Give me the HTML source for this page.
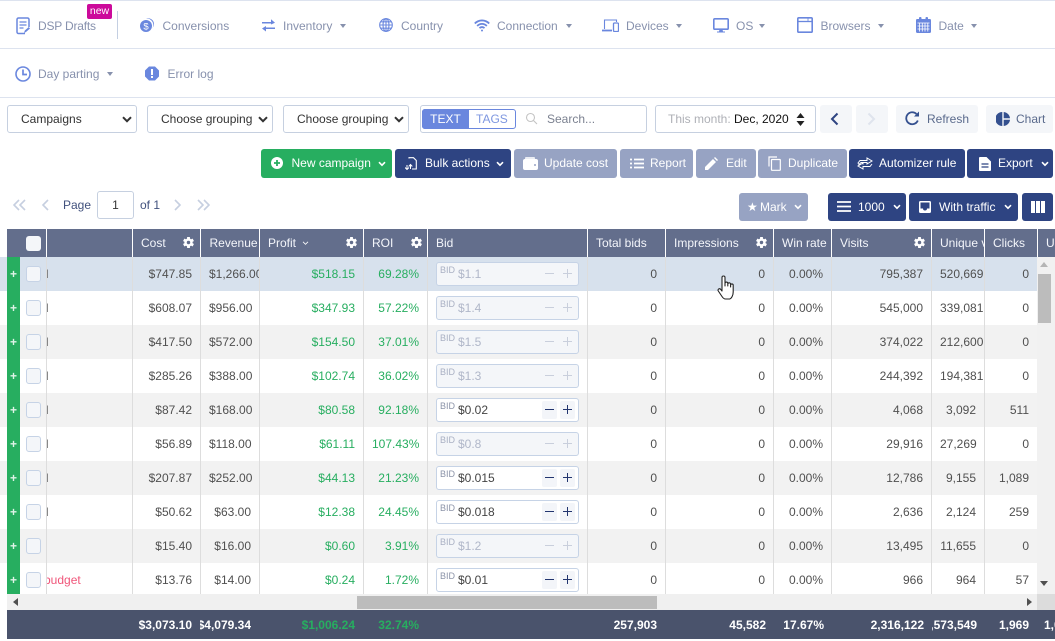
<!DOCTYPE html>
<html><head><meta charset="utf-8"><style>
html,body{margin:0;padding:0;background:#fff}
#p{position:relative;width:1055px;height:641px;overflow:hidden;font:12px/16px "Liberation Sans",Arial,sans-serif;color:#333;background:#fff}
#p div,#p span,#p svg{position:absolute}
.t{white-space:nowrap}
.n{color:#8791ad;top:18px;white-space:nowrap}
.n2{top:66px}
.hl{height:1px;left:0;width:1055px;background:#dde3ef}
.sel{top:105px;height:28px;box-sizing:border-box;border:1px solid #c6d0e0;border-radius:3px;background:#fff;line-height:26px;color:#333;white-space:nowrap}
.gb{top:105px;height:28px;background:#f4f6f9;border-radius:3px;line-height:28px;color:#5a6a8c;white-space:nowrap}
.b{top:149px;height:29px;border-radius:3px;color:#fff;background:#2e4482}
.b3{top:193px;height:28px;border-radius:3px;color:#fff;background:#2e4482}
.l{background:#97a3c3}
.tx{top:6px;white-space:nowrap}
.b3 .tx{top:6px}
.g{background:#27ae60}
.th{top:229px;height:28px;background:#636e8c}
.hc{top:235px;color:#f4f6fb;white-space:nowrap}
.hb{top:229px;width:1px;height:28px;background:#fff}
.r{left:0;width:1037px;height:34px;overflow:hidden}
.r>div{top:0;height:34px;line-height:34px;border-left:1px solid #ddd;box-sizing:border-box;overflow:hidden;white-space:nowrap;text-align:right;padding:0 8px;color:#505050}
.r>.pl{left:7px;width:13px;background:#27ae60;border:0;padding:0}
.r>.ck{left:26px;top:9px;width:15px;height:16px;box-sizing:border-box;border:1px solid #c6d3e6;border-radius:3px;background:#f4f6f9;padding:0}
.r>.a{left:46px;width:86px;text-align:left;padding:0}
.a span{left:-5px;top:0;color:#777}
.r>.co{left:132px;width:68px}
.r>.re{left:200px;width:59px}
.r>.pr{left:259px;width:104px;color:#27ae60}
.r>.ro{left:363px;width:64px;color:#27ae60}
.r>.bd{left:427px;width:160px;padding:0}
.r>.tb{left:587px;width:78px}
.r>.im{left:665px;width:108px}
.r>.wi{left:773px;width:58px}
.r>.vi{left:831px;width:100px}
.r>.un{left:931px;width:53px}
.r>.cl{left:984px;width:53px}
.in{left:8px;top:5px;width:143px;height:24px;box-sizing:border-box;border:1px solid #c6d3e6;border-radius:3px;background:#fff}
.in.d{background:#f4f6f9}
.bl{left:3px;top:-6px;font-size:9px;color:#8b93a8;line-height:26px}
.d .bl{color:#a9b0c3}
.vl{left:21px;top:-6px;line-height:34px;color:#444;text-align:left}
.d .vl{color:#b0b7c9}
.mn,.ps{top:2px;width:15px;height:18px;background:#f3f5f9;border-radius:2px}
.mn{left:105px}.ps{left:123px}
.d .mn,.d .ps{background:none}
.mn:before{content:"";position:absolute;left:3px;top:8px;width:9px;height:1px;background:#22356f}
.ps:before{content:"";position:absolute;left:3px;top:8px;width:9px;height:1px;background:#22356f}
.ps:after{content:"";position:absolute;left:7px;top:4px;width:1px;height:9px;background:#22356f}
.d .mn:before,.d .ps:before,.d .ps:after{background:#c9cfdc}
.f{top:610px;height:29px;left:7px;width:1048px;background:#4a536c}
.ft{top:617px;font-weight:bold;color:#fff;white-space:nowrap;overflow:hidden;display:flex;justify-content:flex-end}
.ft.gr{color:#27ae60}
.ft b{flex:none}
.pg{top:197px;color:#41517d;white-space:nowrap}
</style></head><body><div id="p">
<svg width="0" height="0"><defs>
<symbol id="gear" viewBox="0 0 12 12"><g fill="#fff"><rect x="4.4" y="0" width="3.2" height="12" rx=".5"/><rect x="4.4" y="0" width="3.2" height="12" rx=".5" transform="rotate(60 6 6)"/><rect x="4.4" y="0" width="3.2" height="12" rx=".5" transform="rotate(120 6 6)"/><circle cx="6" cy="6" r="4.5"/></g><circle cx="6" cy="6" r="1.9" fill="#636e8c"/></symbol>
<symbol id="ch" viewBox="0 0 8 6"><path d="M1 1.2l3 3 3-3" fill="none" stroke="#fff" stroke-width="1.6"/></symbol>
<symbol id="dk" viewBox="0 0 10 7"><path d="M1 1.2l4 4 4-4" fill="none" stroke="#333" stroke-width="2"/></symbol>
<symbol id="ca" viewBox="0 0 6 4"><path d="M0 0h6L3 4z" fill="#8791ad"/></symbol>
</defs></svg>

<div class="hl" style="top:0"></div><div class="hl" style="top:48px"></div><div class="hl" style="top:97px"></div>
<div style="left:117px;top:11px;width:1px;height:28px;background:#c4cfe2"></div>

<svg style="left:16px;top:17px" width="14" height="18" viewBox="0 0 14 18"><path d="M9 16.500H2.500a1.500 1.500 0 0 1-1.500-1.500V2.500A1.500 1.500 0 0 1 2.500 1h9A1.500 1.500 0 0 1 13 2.500V10" fill="none" stroke="#6a87de" stroke-width="1.500"/><path d="M3.500 5h7M3.500 8h7M3.500 11h4" stroke="#6a87de" stroke-width="1.200"/><path d="M8 16l.8-2.500 4-3.500 1.200 1.500-4 3.500z" fill="#6a87de"/></svg>
<span class="n" style="left:38px;letter-spacing:-.2px">DSP Drafts</span>
<div style="left:87px;top:4px;width:25px;height:15px;background:#cc0a9b;border-radius:2px;color:#fff;font-size:10.500px;line-height:15px;text-align:center">new</div>

<svg style="left:140px;top:17px" width="14" height="16" viewBox="0 0 14 16"><path d="M6 1.500A6 6 0 0 1 14 7a6 6 0 0 1-1.500 4 6.500 6.500 0 0 0-6.500-9.500z" fill="#6a87de"/><circle cx="6" cy="9" r="6" fill="#6a87de"/><text x="6" y="12.500" font-size="9.500" text-anchor="middle" fill="#fff" font-family="Liberation Sans">$</text></svg>
<span class="n" style="left:162.500px">Conversions</span>

<svg style="left:262px;top:18px" width="13" height="14" viewBox="0 0 13 14"><path d="M0 4h9V1.200L13 4.800l-4 1.700V5.500H0zM13 9.500H4V8L0 10.500 4 13.500V11h9z" fill="#6a87de"/></svg>
<span class="n" style="left:283px">Inventory</span>
<svg style="left:340px;top:24px" width="6" height="4"><use href="#ca"/></svg>

<svg style="left:379px;top:18px" width="14" height="14" viewBox="0 0 14 14" fill="none" stroke="#6a87de" stroke-width="1.100"><circle cx="7" cy="7" r="6.300"/><ellipse cx="7" cy="7" rx="3" ry="6.300"/><path d="M.7 7h12.600M1.600 3.800h10.800M1.600 10.200h10.800M7 .7v12.600"/></svg>
<span class="n" style="left:401px">Country</span>

<svg style="left:474px;top:19px" width="16" height="13" viewBox="0 0 16 13" fill="none" stroke="#6a87de" stroke-width="1.800"><path d="M.8 4.500a10 10 0 0 1 14.400 0M3.200 7a6.500 6.500 0 0 1 9.600 0M5.500 9.200a3.300 3.300 0 0 1 5 0"/><circle cx="8" cy="11.500" r="1" fill="#6a87de" stroke="none"/></svg>
<span class="n" style="left:497px">Connection</span>
<svg style="left:566px;top:24px" width="6" height="4"><use href="#ca"/></svg>

<svg style="left:602px;top:19px" width="17" height="13" viewBox="0 0 17 13" fill="none" stroke="#6a87de"><path d="M2.500 10V1h12v2" stroke-width="1.100"/><path d="M0 11.500h10" stroke-width="1.800"/><rect x="11.500" y="4" width="5" height="8.500" rx="1" stroke-width="1.300"/></svg>
<span class="n" style="left:626px">Devices</span>
<svg style="left:676px;top:24px" width="6" height="4"><use href="#ca"/></svg>

<svg style="left:713px;top:18px" width="16" height="15" viewBox="0 0 16 15"><rect x=".8" y=".8" width="14.400" height="10.400" rx="1" fill="none" stroke="#6a87de" stroke-width="1.600"/><path d="M6.500 11.500h3l.5 2h2v1H4v-1h2z" fill="#6a87de"/></svg>
<span class="n" style="left:736px">OS</span>
<svg style="left:759px;top:24px" width="6" height="4"><use href="#ca"/></svg>

<svg style="left:797px;top:17px" width="16" height="16" viewBox="0 0 16 16" fill="none" stroke="#6a87de"><rect x=".8" y=".8" width="14.400" height="14.400" rx="1" stroke-width="1.600"/><path d="M1 4.500h14" stroke-width="1.300"/><path d="M11 1v3.500" stroke-width=".8"/></svg>
<span class="n" style="left:820.500px">Browsers</span>
<svg style="left:878px;top:24px" width="6" height="4"><use href="#ca"/></svg>

<svg style="left:916px;top:17px" width="15" height="16" viewBox="0 0 15 16"><rect x="0" y="2" width="15" height="14" rx="1.200" fill="#6a87de"/><rect x="3" y="0" width="2.500" height="4" rx="1" fill="#6a87de"/><rect x="9.500" y="0" width="2.500" height="4" rx="1" fill="#6a87de"/><path d="M1.500 6h12M1.500 9h12M1.500 12h12M3.500 6v8.500M6.300 6v8.500M9 6v8.500M11.800 6v8.500" stroke="#fff" stroke-width=".8"/></svg>
<span class="n" style="left:938.500px">Date</span>
<svg style="left:971px;top:24px" width="6" height="4"><use href="#ca"/></svg>

<svg style="left:15px;top:66px" width="16" height="16" viewBox="0 0 16 16" fill="none" stroke="#6a87de"><circle cx="8" cy="8" r="7" stroke-width="1.600"/><path d="M8 3.500V8.500h4" stroke-width="1.700"/></svg>
<span class="n n2" style="left:38px">Day parting</span>
<svg style="left:107px;top:72px" width="6" height="4"><use href="#ca"/></svg>
<svg style="left:145px;top:66px" width="14" height="15" viewBox="0 0 14 15"><path d="M4 .5h6L14 4.500v6L10 14.500H4L0 10.500v-6z" fill="#6a87de"/><rect x="6" y="3" width="2" height="6" fill="#fff"/><rect x="6" y="10" width="2" height="2" fill="#fff"/></svg>
<span class="n n2" style="left:167.500px">Error log</span>

<div class="sel" style="left:7px;width:130px;padding-left:13px">Campaigns</div>
<svg style="left:122px;top:116px" width="10" height="7"><use href="#dk"/></svg>
<div class="sel" style="left:147px;width:126px;padding-left:13px">Choose grouping</div>
<svg style="left:258px;top:116px" width="10" height="7"><use href="#dk"/></svg>
<div class="sel" style="left:283px;width:126px;padding-left:13px">Choose grouping</div>
<svg style="left:394px;top:116px" width="10" height="7"><use href="#dk"/></svg>

<div class="sel" style="left:420px;width:227px"></div>
<div style="left:422px;top:109px;width:94px;height:20px;box-sizing:border-box;border:1px solid #6a87de;border-radius:3px;background:#fff"></div>
<div style="left:422px;top:109px;width:47px;height:20px;background:#6a87de;border-radius:3px 0 0 3px;color:#fff;line-height:20px;text-align:center">TEXT</div>
<span class="t" style="left:476px;top:111px;color:#7e97e0">TAGS</span>
<svg style="left:525px;top:112px" width="13" height="13" viewBox="0 0 13 13" fill="none" stroke="#c4c4c4" stroke-width="1.100"><circle cx="5.500" cy="5.500" r="4"/><path d="M8.500 8.500l3.500 3.500"/></svg>
<span class="t" style="left:547px;top:111px;color:#7b8190">Search...</span>

<div class="sel" style="left:655px;width:161px"></div>
<span class="t" style="left:668px;top:111px;color:#aeb0b6">This month:</span>
<span class="t" style="left:734px;top:111px;color:#111">Dec, 2020</span>
<svg style="left:796px;top:113px" width="9" height="13" viewBox="0 0 9 13"><path d="M4.500 0L8.500 5H.5zM4.500 13L.5 8h8z" fill="#222"/></svg>

<div class="gb" style="left:820px;width:32px"></div>
<svg style="left:830px;top:112px" width="9" height="14" viewBox="0 0 9 14"><path d="M7.500 1.500L2 7l5.500 5.500" fill="none" stroke="#2e4482" stroke-width="2"/></svg>
<div class="gb" style="left:856px;width:32px"></div>
<svg style="left:867px;top:112px" width="9" height="14" viewBox="0 0 9 14"><path d="M1.500 1.500L7 7l-5.500 5.500" fill="none" stroke="#dfe4ed" stroke-width="2"/></svg>
<div class="gb" style="left:896px;width:82px"></div>
<svg style="left:905px;top:111px" width="15" height="15" viewBox="0 0 15 15" fill="none" stroke="#34508f" stroke-width="1.800"><path d="M12.800 9.500A6 6 0 1 1 11.500 3"/><path d="M14 .5v5h-5z" fill="#34508f" stroke="none"/></svg>
<span class="t" style="left:927px;top:111px;color:#5a6a8c">Refresh</span>
<div class="gb" style="left:986px;width:67px"></div>
<svg style="left:996px;top:112px" width="14" height="14" viewBox="0 0 14 14"><path d="M6.300 0v14A7 7 0 0 1 6.300 0zM7.700 0A7 7 0 0 1 14 6.300H7.700zM7.700 7.700H14A7 7 0 0 1 7.700 14z" fill="#34508f"/></svg>
<span class="t" style="left:1016px;top:111px;color:#5a6a8c">Chart</span>

<div class="b g" style="left:261px;width:131px"><span class="tx" style="left:30.500px">New campaign</span>
<svg style="left:10px;top:8px" width="12" height="12" viewBox="0 0 12 12"><circle cx="6" cy="6" r="6" fill="#fff"/><path d="M3 6h6M6 3v6" stroke="#27ae60" stroke-width="1.800"/></svg>
<svg style="left:117px;top:12px" width="8" height="6"><use href="#ch"/></svg></div>
<div class="b" style="left:395px;width:116px"><span class="tx" style="left:30px">Bulk actions</span>
<svg style="left:10px;top:8px" width="12" height="13" viewBox="0 0 12 13" fill="none" stroke="#fff"><path d="M4 1.500V.7h4.500L11.300 3.500V12H7" stroke-width="1.100"/><path d="M2 8v4M0 10.500l2 2 2-2M5.500 12V8M3.700 9.500l1.800-2 1.800 2" stroke-width="1"/></svg>
<svg style="left:101px;top:12px" width="8" height="6"><use href="#ch"/></svg></div>
<div class="b l" style="left:514px;width:103px"><span class="tx" style="left:30px">Update cost</span>
<svg style="left:9px;top:8px" width="15" height="13" viewBox="0 0 15 13"><rect x="0" y="2" width="15" height="11" rx="2" fill="#fff"/><rect x="2" y="0" width="10" height="2.500" rx="1" fill="#fff" opacity=".8"/><circle cx="12" cy="8" r="1" fill="#97a3c3"/></svg></div>
<div class="b l" style="left:620px;width:73px"><span class="tx" style="left:30px">Report</span>
<svg style="left:10px;top:9px" width="14" height="11" viewBox="0 0 14 11"><path d="M4 1.500h10M4 5.500h10M4 9.500h10M0 1.500h2M0 5.500h2M0 9.500h2" stroke="#fff" stroke-width="1.800"/></svg></div>
<div class="b l" style="left:696px;width:60px"><span class="tx" style="left:30px">Edit</span>
<svg style="left:9px;top:8px" width="13" height="13" viewBox="0 0 13 13"><path d="M0 13V10L8 2l3 3-8 8zM9 1l1-1 3 3-1 1z" fill="#fff"/></svg></div>
<div class="b l" style="left:758px;width:89px"><span class="tx" style="left:30px">Duplicate</span>
<svg style="left:10px;top:7px" width="13" height="15" viewBox="0 0 13 15" fill="none" stroke="#fff" stroke-width="1.200"><path d="M1 10.500V1h8"/><rect x="3.500" y="3.500" width="8.800" height="10.800" rx=".5"/></svg></div>
<div class="b" style="left:849px;width:116px"><span class="tx" style="left:30px">Automizer rule</span>
<svg style="left:8px;top:8px" width="16" height="13" viewBox="0 0 16 13" fill="none" stroke="#fff" stroke-width="1"><path d="M1 6l2-2.500h7V1l5 3-5 3V5.500H4L2 7.500zM15 7l-2 2.500H6V12L1 9l5-3v1.500"/></svg></div>
<div class="b" style="left:967px;width:86px"><span class="tx" style="left:31px">Export</span>
<svg style="left:12px;top:8px" width="12" height="14" viewBox="0 0 12 14"><path d="M0 1a1 1 0 0 1 1-1h6.500L12 4.500V13a1 1 0 0 1-1 1H1a1 1 0 0 1-1-1z" fill="#fff"/><path d="M2.500 7h7M2.500 10h7" stroke="#2e4482" stroke-width="1.200"/></svg>
<svg style="left:74px;top:12px" width="8" height="6"><use href="#ch"/></svg></div>

<svg style="left:13px;top:199px" width="13" height="12" viewBox="0 0 13 12" fill="none" stroke="#c6cfe0" stroke-width="1.600"><path d="M6 1L1 6l5 5M12 1L7 6l5 5"/></svg>
<svg style="left:41px;top:199px" width="8" height="12" viewBox="0 0 8 12" fill="none" stroke="#c6cfe0" stroke-width="1.600"><path d="M7 1L2 6l5 5"/></svg>
<span class="pg" style="left:63px">Page</span>
<div style="left:97px;top:191px;width:37px;height:28px;box-sizing:border-box;border:1px solid #c6d0e0;border-radius:3px;text-align:center;line-height:26px;color:#333">1</div>
<span class="pg" style="left:140px">of 1</span>
<svg style="left:174px;top:199px" width="8" height="12" viewBox="0 0 8 12" fill="none" stroke="#c6cfe0" stroke-width="1.600"><path d="M1 1l5 5-5 5"/></svg>
<svg style="left:197px;top:199px" width="13" height="12" viewBox="0 0 13 12" fill="none" stroke="#c6cfe0" stroke-width="1.600"><path d="M1 1l5 5-5 5M7 1l5 5-5 5"/></svg>

<div class="b3 l" style="left:739px;width:69px"><span class="tx" style="left:8px">★</span><span class="tx" style="left:21px">Mark</span>
<svg style="left:55px;top:11px" width="8" height="6"><use href="#ch"/></svg></div>
<div class="b3" style="left:828px;width:78px"><span class="tx" style="left:30px">1000</span>
<svg style="left:9px;top:8px" width="14" height="11" viewBox="0 0 14 11"><path d="M0 1h14M0 5.500h14M0 10h14" stroke="#fff" stroke-width="1.800"/></svg>
<svg style="left:65px;top:11px" width="8" height="6"><use href="#ch"/></svg></div>
<div class="b3" style="left:909px;width:109px"><span class="tx" style="left:30px">With traffic</span>
<svg style="left:10px;top:8px" width="12" height="12" viewBox="0 0 12 12"><path d="M1.500 0h9A1.500 1.500 0 0 1 12 1.500v9a1.500 1.500 0 0 1-1.500 1.500h-9A1.500 1.500 0 0 1 0 10.500v-9A1.500 1.500 0 0 1 1.500 0zM1.500 1.500V7.500H4a2 2 0 0 0 4 0h2.500V1.500z" fill="#fff" fill-rule="evenodd"/></svg>
<svg style="left:95px;top:11px" width="8" height="6"><use href="#ch"/></svg></div>
<div class="b3" style="left:1022px;width:31px"><svg style="left:9px;top:8px" width="14" height="12" viewBox="0 0 14 12"><path d="M0 0h4v12H0zM5 0h4v12H5zM10 0h4v12h-4z" fill="#fff"/></svg></div>

<div class="th" style="left:7px;width:1048px"></div>
<div style="left:26px;top:236px;width:15px;height:15px;border-radius:3px;background:#f4f6f9"></div>
<div class="hb" style="left:46px"></div><div class="hb" style="left:132px"></div><div class="hb" style="left:200px"></div><div class="hb" style="left:259px"></div><div class="hb" style="left:363px"></div><div class="hb" style="left:427px"></div><div class="hb" style="left:587px"></div><div class="hb" style="left:665px"></div><div class="hb" style="left:773px"></div><div class="hb" style="left:831px"></div><div class="hb" style="left:931px"></div><div class="hb" style="left:984px"></div><div class="hb" style="left:1037px"></div>
<span class="hc" style="left:141px">Cost</span><svg style="left:183px;top:237px" width="11" height="11"><use href="#gear"/></svg>
<span class="hc" style="left:209.500px">Revenue</span>
<span class="hc" style="left:268px">Profit</span><svg style="left:302px;top:241px" width="7" height="5" viewBox="0 0 8 6"><path d="M1 1l3 3 3-3" fill="none" stroke="#fff" stroke-width="1"/></svg><svg style="left:346px;top:237px" width="11" height="11"><use href="#gear"/></svg>
<span class="hc" style="left:372px">ROI</span><svg style="left:411px;top:237px" width="11" height="11"><use href="#gear"/></svg>
<span class="hc" style="left:436px">Bid</span>
<span class="hc" style="left:596px">Total bids</span>
<span class="hc" style="left:674px">Impressions</span><svg style="left:756px;top:237px" width="11" height="11"><use href="#gear"/></svg>
<span class="hc" style="left:782px">Win rate</span>
<span class="hc" style="left:840px">Visits</span><svg style="left:914px;top:237px" width="11" height="11"><use href="#gear"/></svg>
<div class="hc" style="left:940px;width:44px;overflow:hidden">Unique visits</div>
<span class="hc" style="left:993px">Clicks</span>
<span class="hc" style="left:1046px">U</span>

<div class="r" style="top:257px;background:#d7e1ed"><div class="pl"></div><div class="ck"></div><div class="a"><span>d</span></div><div class="co">$747.85</div><div class="re">$1,266.00</div><div class="pr">$518.15</div><div class="ro">69.28%</div><div class="bd"><div class="in d"><span class="bl">BID</span><span class="vl">$1.1</span><i class="mn" style="position:absolute"></i><i class="ps" style="position:absolute"></i></div></div><div class="tb">0</div><div class="im">0</div><div class="wi">0.00%</div><div class="vi">795,387</div><div class="un">520,669</div><div class="cl">0</div></div>
<div class="r" style="top:291px;background:#fff"><div class="pl"></div><div class="ck"></div><div class="a"><span>d</span></div><div class="co">$608.07</div><div class="re">$956.00</div><div class="pr">$347.93</div><div class="ro">57.22%</div><div class="bd"><div class="in d"><span class="bl">BID</span><span class="vl">$1.4</span><i class="mn" style="position:absolute"></i><i class="ps" style="position:absolute"></i></div></div><div class="tb">0</div><div class="im">0</div><div class="wi">0.00%</div><div class="vi">545,000</div><div class="un">339,081</div><div class="cl">0</div></div>
<div class="r" style="top:325px;background:#f2f2f2"><div class="pl"></div><div class="ck"></div><div class="a"><span>d</span></div><div class="co">$417.50</div><div class="re">$572.00</div><div class="pr">$154.50</div><div class="ro">37.01%</div><div class="bd"><div class="in d"><span class="bl">BID</span><span class="vl">$1.5</span><i class="mn" style="position:absolute"></i><i class="ps" style="position:absolute"></i></div></div><div class="tb">0</div><div class="im">0</div><div class="wi">0.00%</div><div class="vi">374,022</div><div class="un">212,600</div><div class="cl">0</div></div>
<div class="r" style="top:359px;background:#fff"><div class="pl"></div><div class="ck"></div><div class="a"><span>d</span></div><div class="co">$285.26</div><div class="re">$388.00</div><div class="pr">$102.74</div><div class="ro">36.02%</div><div class="bd"><div class="in d"><span class="bl">BID</span><span class="vl">$1.3</span><i class="mn" style="position:absolute"></i><i class="ps" style="position:absolute"></i></div></div><div class="tb">0</div><div class="im">0</div><div class="wi">0.00%</div><div class="vi">244,392</div><div class="un">194,381</div><div class="cl">0</div></div>
<div class="r" style="top:393px;background:#f2f2f2"><div class="pl"></div><div class="ck"></div><div class="a"><span>d</span></div><div class="co">$87.42</div><div class="re">$168.00</div><div class="pr">$80.58</div><div class="ro">92.18%</div><div class="bd"><div class="in"><span class="bl">BID</span><span class="vl">$0.02</span><i class="mn" style="position:absolute"></i><i class="ps" style="position:absolute"></i></div></div><div class="tb">0</div><div class="im">0</div><div class="wi">0.00%</div><div class="vi">4,068</div><div class="un">3,092</div><div class="cl">511</div></div>
<div class="r" style="top:427px;background:#fff"><div class="pl"></div><div class="ck"></div><div class="a"><span>d</span></div><div class="co">$56.89</div><div class="re">$118.00</div><div class="pr">$61.11</div><div class="ro">107.43%</div><div class="bd"><div class="in d"><span class="bl">BID</span><span class="vl">$0.8</span><i class="mn" style="position:absolute"></i><i class="ps" style="position:absolute"></i></div></div><div class="tb">0</div><div class="im">0</div><div class="wi">0.00%</div><div class="vi">29,916</div><div class="un">27,269</div><div class="cl">0</div></div>
<div class="r" style="top:461px;background:#f2f2f2"><div class="pl"></div><div class="ck"></div><div class="a"><span>d</span></div><div class="co">$207.87</div><div class="re">$252.00</div><div class="pr">$44.13</div><div class="ro">21.23%</div><div class="bd"><div class="in"><span class="bl">BID</span><span class="vl">$0.015</span><i class="mn" style="position:absolute"></i><i class="ps" style="position:absolute"></i></div></div><div class="tb">0</div><div class="im">0</div><div class="wi">0.00%</div><div class="vi">12,786</div><div class="un">9,155</div><div class="cl">1,089</div></div>
<div class="r" style="top:495px;background:#fff"><div class="pl"></div><div class="ck"></div><div class="a"><span>d</span></div><div class="co">$50.62</div><div class="re">$63.00</div><div class="pr">$12.38</div><div class="ro">24.45%</div><div class="bd"><div class="in"><span class="bl">BID</span><span class="vl">$0.018</span><i class="mn" style="position:absolute"></i><i class="ps" style="position:absolute"></i></div></div><div class="tb">0</div><div class="im">0</div><div class="wi">0.00%</div><div class="vi">2,636</div><div class="un">2,124</div><div class="cl">259</div></div>
<div class="r" style="top:529px;background:#f2f2f2"><div class="pl"></div><div class="ck"></div><div class="a"></div><div class="co">$15.40</div><div class="re">$16.00</div><div class="pr">$0.60</div><div class="ro">3.91%</div><div class="bd"><div class="in d"><span class="bl">BID</span><span class="vl">$1.2</span><i class="mn" style="position:absolute"></i><i class="ps" style="position:absolute"></i></div></div><div class="tb">0</div><div class="im">0</div><div class="wi">0.00%</div><div class="vi">13,495</div><div class="un">11,655</div><div class="cl">0</div></div>
<div class="r" style="top:563px;height:31px;background:#fff"><div class="pl"></div><div class="ck"></div><div class="a"><span style="left:-3px;color:#f0567a">budget</span></div><div class="co">$13.76</div><div class="re">$14.00</div><div class="pr">$0.24</div><div class="ro">1.72%</div><div class="bd"><div class="in"><span class="bl">BID</span><span class="vl">$0.01</span><i class="mn" style="position:absolute"></i><i class="ps" style="position:absolute"></i></div></div><div class="tb">0</div><div class="im">0</div><div class="wi">0.00%</div><div class="vi">966</div><div class="un">964</div><div class="cl">57</div></div>

<span style="left:7px;top:266px;width:13px;text-align:center;color:#dff3e7;font-weight:bold">+</span>
<span style="left:7px;top:300px;width:13px;text-align:center;color:#dff3e7;font-weight:bold">+</span>
<span style="left:7px;top:334px;width:13px;text-align:center;color:#dff3e7;font-weight:bold">+</span>
<span style="left:7px;top:368px;width:13px;text-align:center;color:#dff3e7;font-weight:bold">+</span>
<span style="left:7px;top:402px;width:13px;text-align:center;color:#dff3e7;font-weight:bold">+</span>
<span style="left:7px;top:436px;width:13px;text-align:center;color:#dff3e7;font-weight:bold">+</span>
<span style="left:7px;top:470px;width:13px;text-align:center;color:#dff3e7;font-weight:bold">+</span>
<span style="left:7px;top:504px;width:13px;text-align:center;color:#dff3e7;font-weight:bold">+</span>
<span style="left:7px;top:538px;width:13px;text-align:center;color:#dff3e7;font-weight:bold">+</span>
<span style="left:7px;top:572px;width:13px;text-align:center;color:#dff3e7;font-weight:bold">+</span>

<div style="left:1037px;top:257px;width:18px;height:337px;background:#f1f1f1"></div>
<div style="left:1038px;top:274px;width:13px;height:49px;background:#bcbcbc"></div>
<svg style="left:1040px;top:262px" width="8" height="5"><path d="M4 0l4 5H0z" fill="#b5b5b5"/></svg>
<svg style="left:1040px;top:581px" width="8" height="5"><path d="M0 0h8L4 5z" fill="#505050"/></svg>
<div style="left:7px;top:594px;width:1030px;height:16px;background:#f0f0f0"></div>
<div style="left:1037px;top:594px;width:18px;height:16px;background:#dcdcdc"></div>
<div style="left:357px;top:596px;width:300px;height:13px;background:#bcbcbc"></div>
<svg style="left:13px;top:598px" width="5" height="8"><path d="M5 0v8L0 4z" fill="#505050"/></svg>
<svg style="left:1027px;top:598px" width="5" height="8"><path d="M0 0v8l5-4z" fill="#505050"/></svg>

<div class="f"></div>
<div class="ft" style="left:132px;width:60px"><b>$3,073.10</b></div>
<div class="ft" style="left:200px;width:51px"><b>$4,079.34</b></div>
<div class="ft gr" style="left:259px;width:96px"><b>$1,006.24</b></div>
<div class="ft gr" style="left:363px;width:56px"><b>32.74%</b></div>
<div class="ft" style="left:587px;width:70px"><b>257,903</b></div>
<div class="ft" style="left:665px;width:101px"><b>45,582</b></div>
<div class="ft" style="left:773px;width:51px"><b>17.67%</b></div>
<div class="ft" style="left:831px;width:93px"><b>2,316,122</b></div>
<div class="ft" style="left:932px;width:45px"><b>1,573,549</b></div>
<div class="ft" style="left:984px;width:45px"><b>1,969</b></div>
<span class="ft" style="left:1044px"><b>1,0</b></span>

<svg style="left:717px;top:275px" width="20" height="26" viewBox="0 0 20 26"><path d="M5 2.500a1.500 1.500 0 0 1 3 0V11V8.500a1.400 1.400 0 0 1 2.800 0V11V9.200a1.400 1.400 0 0 1 2.800 0V12v-1.800a1.300 1.300 0 0 1 2.600 0V17c0 3.500-1.800 6.500-3.500 7H8.500c-1.500 0-2.500-1-3.500-2.500L1.300 16c-.9-1.500 1-3 2.200-1.800L5 16z" fill="#fff" stroke="#222" stroke-width="1.100" stroke-linejoin="round"/></svg>
</div></body></html>
